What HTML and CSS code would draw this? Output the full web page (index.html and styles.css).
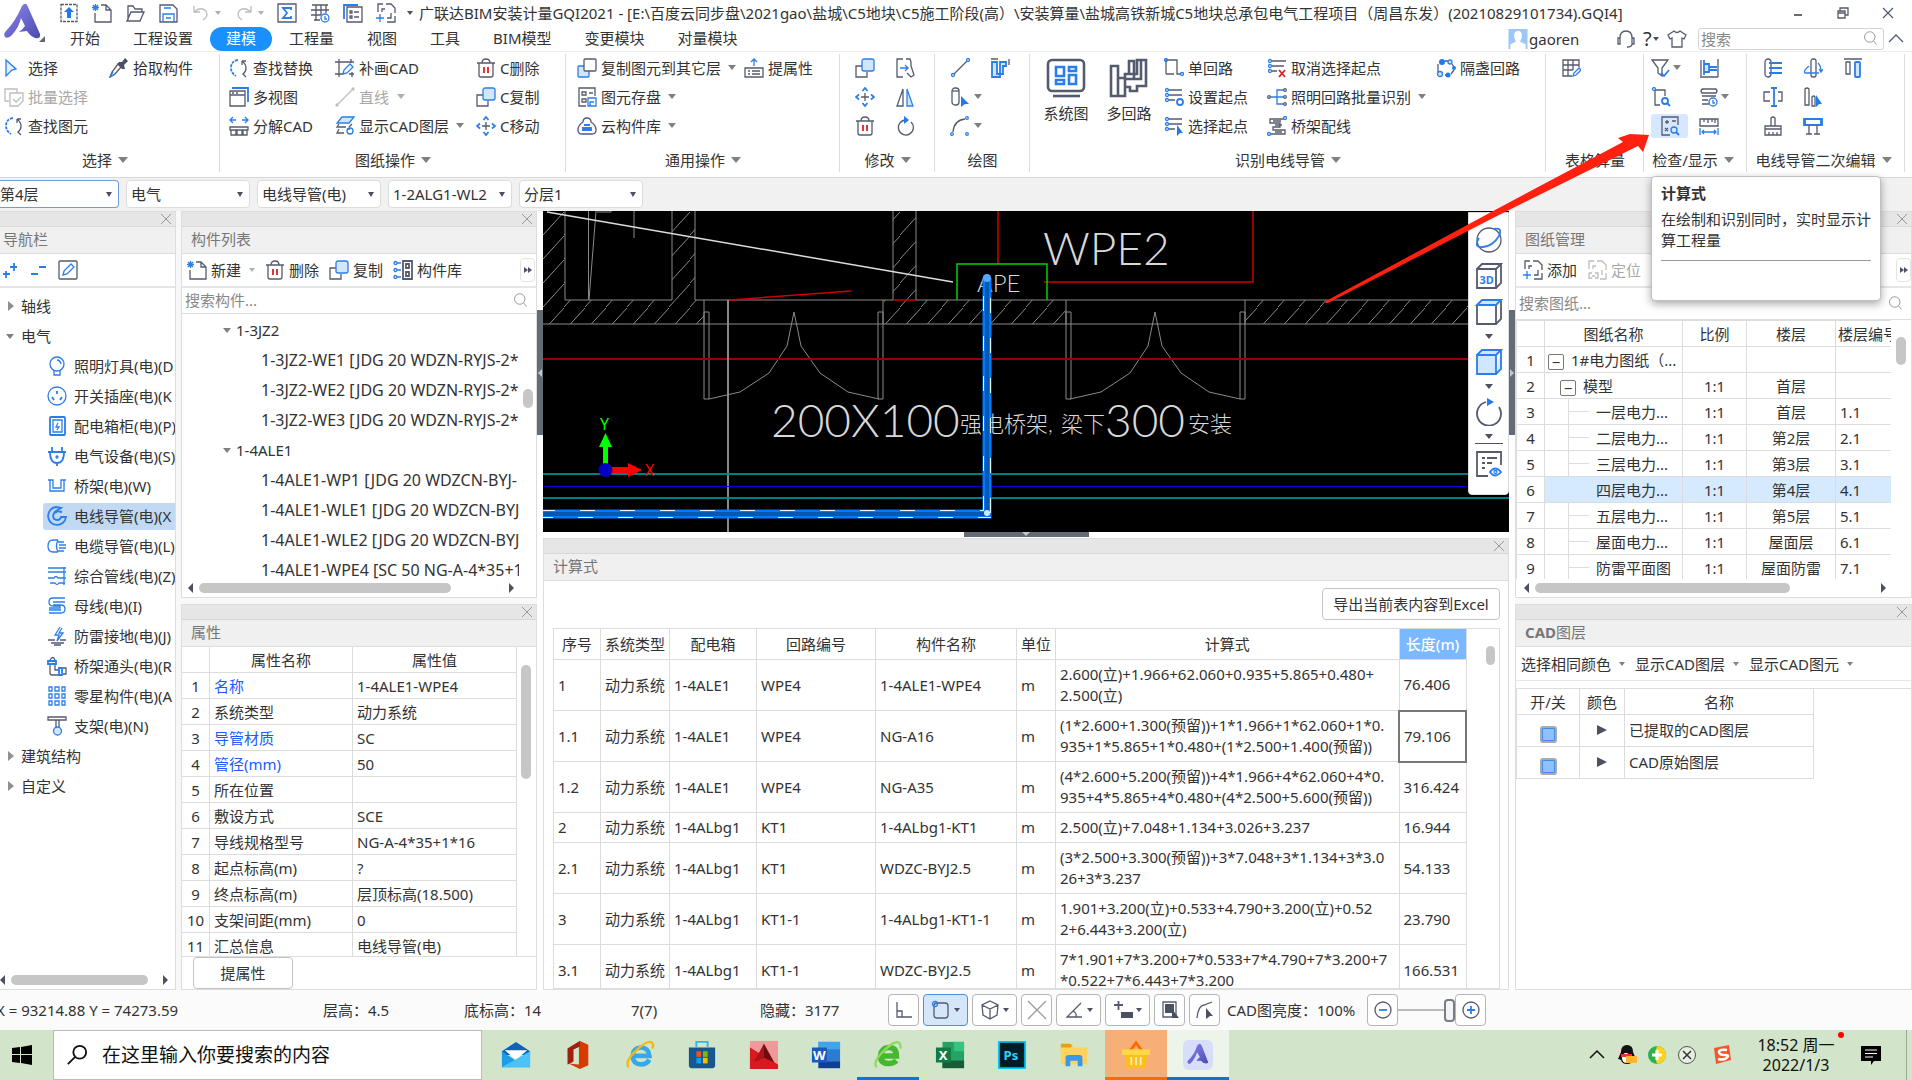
FILE: index.html
```html
<!DOCTYPE html>
<html lang="zh-CN">
<head>
<meta charset="utf-8">
<title>广联达BIM安装计量GQI2021</title>
<link rel="stylesheet" href="styles.css">
</head>
<body>
<svg class="sprite" aria-hidden="true">
  <defs>
    <linearGradient id="g-logo" x1="0" y1="0" x2="1" y2="1"><stop offset="0" stop-color="#8f86ee"/><stop offset="1" stop-color="#4a4bb0"/></linearGradient>
    <pattern id="hatch" width="21" height="24" patternUnits="userSpaceOnUse"><path d="M0 24L21 1" stroke="#8a8a8a" fill="none"/></pattern>
  </defs>
  <symbol id="i-upload" viewBox="0 0 20 20"><path class="d dash" d="M2 1.500h16v17h-16z"/><path class="fb" d="M10 4l5 5h-3v6h-4v-6h-3z"/></symbol>
  <symbol id="i-new" viewBox="0 0 20 20"><path class="d" d="M9 2h5l5 5v12h-16v-9M14 2v5h5"/><path class="b" d="M1 2l5 5M6 2l-5 5M3.500 1v7M0 4.500h7"/></symbol>
  <symbol id="i-open" viewBox="0 0 20 20"><path class="d" d="M3 17v-14h5l2 3h7v3M2 18l4-9h13l-4 9z"/></symbol>
  <symbol id="i-save" viewBox="0 0 20 20"><path class="d" d="M2 2h13l4 4v13h-17z"/><path class="b" d="M5 19v-8h11v8M6 5h7M8 15h5"/></symbol>
  <symbol id="i-undo" viewBox="0 0 20 20"><path class="g" d="M3 3v6h6M3 9q7-6 12-1q3 5-3 9"/></symbol>
  <symbol id="i-redo" viewBox="0 0 20 20"><path class="g" d="M17 3v6h-6M17 9q-7-6-12-1q-3 5 3 9"/></symbol>
  <symbol id="i-sum" viewBox="0 0 20 20"><path class="d" d="M1 1h18v18h-18z"/><path class="b w2" d="M14 7v-2h-8l4 5-4 5h8v-2"/></symbol>
  <symbol id="i-grid" viewBox="0 0 20 20"><path class="d" d="M2 2h16M1 7h18M1 12h10M4 17h6M6 2v16M11 2v10M16 2v8"/><circle class="b" cx="15" cy="15" r="4"/><path class="b" d="M15 13v3h2"/></symbol>
  <symbol id="i-list" viewBox="0 0 20 20"><path class="b w2" d="M1 16v-14h14"/><path class="d" d="M4 4h15v15h-15zM11 9h5M11 14h5"/><path class="d" d="M7 8h2v2h-2zM7 13h2v2h-2z"/></symbol>
  <symbol id="i-addsheet" viewBox="0 0 20 20"><path class="d" d="M2 9v-8h5M10 1h5l4 4v5M19 13v6h-8M6 9v-3h3M15 10v5h-4"/><path class="b" d="M4 11v8M0 15h8"/></symbol>
  <symbol id="i-locate" viewBox="0 0 20 20"><path class="g" d="M2 9v-8h5M10 1h5l4 4v5M19 13v6h-6M6 9v-3h3M15 10v5M2 13h3M2 13v5h3M8 13h3v5h-3M5 16h3"/></symbol>
  <symbol id="i-cursor" viewBox="0 0 20 20"><path class="b cl" d="M2 2l10 9-4 1-6 6z"/></symbol>
  <symbol id="i-batch" viewBox="0 0 20 20"><path class="g" d="M13 6v-4h-12v12h4M6 6h13v8l-5 5h-8zM9 12l3 3 5-5"/></symbol>
  <symbol id="i-find" viewBox="0 0 20 20"><path class="b w2 dash" d="M9 2q-7 1-7 8 0 5 5 8"/><path class="d" d="M13 3q4 3 4 7 0 4-3 6l3 3M13 3h4M13 3v4"/></symbol>
  <symbol id="i-pipette" viewBox="0 0 20 20"><path class="fd" d="M10 4l3 0 3-4 3 3-4 4 1 4-3 0-5-5z"/><path class="d" d="M9 6l-6 8-2 5 5-3 6-7"/><path class="b" d="M4 14l-3 5 5-3"/></symbol>
  <symbol id="i-drawcad" viewBox="0 0 20 20"><path class="d" d="M0 4h19M4 1v18M0 16h8M16 1v4M14 16h5M17 14v5"/><path class="b" d="M8 16l1-4 6-6 3 3-6 6z"/></symbol>
  <symbol id="i-trash" viewBox="0 0 20 20"><path class="d" d="M1 5h18M6 5q0-4 4-4t4 4M3 5v12q0 2 2 2h10q2 0 2-2v-12"/><path class="r w2" d="M8 9v6M12 9v6"/></symbol>
  <symbol id="i-multi" viewBox="0 0 20 20"><path class="b w2" d="M3 1h16v14"/><path class="d" d="M1 4h15v15h-15zM1 8h15M3 6h2M7 6h2"/></symbol>
  <symbol id="i-line0" viewBox="0 0 20 20"><path class="g" d="M3 17L17 3"/><circle class="g" cx="2" cy="18" r="1"/><circle class="g" cx="18" cy="2" r="1"/></symbol>
  <symbol id="i-copyc" viewBox="0 0 20 20"><path class="d" d="M7 8h-6v11h11v-5"/><rect class="b lb" x="7" y="1" width="12" height="12" rx="2"/></symbol>
  <symbol id="i-copyf" viewBox="0 0 20 20"><rect class="b lb" x="1" y="8" width="11" height="11" rx="1"/><rect class="d wf" x="7" y="1" width="12" height="12" rx="1"/></symbol>
  <symbol id="i-split" viewBox="0 0 20 20"><path class="b" d="M1 4h6M13 4h6M4 1l-3 3 3 3M16 1l3 3-3 3"/><path class="d" d="M1 11h18v3h-18zM2 14v5h5v-5M8 14v5h5v-5M14 14v5h4v-5"/></symbol>
  <symbol id="i-layers" viewBox="0 0 20 20"><path class="b lb" d="M7 1h12l-5 6h-12z"/><path class="d" d="M4 8l-2 3h9M17 8l-3 3M4 13l-2 4h7M12 13h3"/><circle class="b" cx="15" cy="15" r="3"/></symbol>
  <symbol id="i-move" viewBox="0 0 20 20"><path class="d" d="M10 6v8M6 10h8"/><path class="b w2" d="M7.500 4l2.500-3 2.500 3M7.500 16l2.500 3 2.500-3M4 7.500l-3 2.500 3 2.500M16 7.500l3 2.500-3 2.500"/></symbol>
  <symbol id="i-storage" viewBox="0 0 20 20"><path class="d" d="M18 9v-8h-16v18h7M5 5h4v3h-4zM12 6h4M5 12h4v3h-4z"/><path class="b" d="M11 11h8v8h-8zM13 19v-4h4"/></symbol>
  <symbol id="i-cloud" viewBox="0 0 20 20"><path class="d" d="M6 6q0-4 4-4t4 4q5 3 5 8 0 4-4 4h-10q-4 0-4-4 0-5 5-8z"/><path class="b w2" d="M7 9h6M6 12h8v2h-8z"/></symbol>
  <symbol id="i-prop" viewBox="0 0 20 20"><path class="b" d="M10 8v-7M7 4l3-3 3 3"/><path class="d" d="M1 10h18v9h-18zM4 13h2M8 13h8M4 16h2M8 16h8"/></symbol>
  <symbol id="i-stretch" viewBox="0 0 20 20"><path class="d" d="M8 1h-6v18h6M11 1h4l1 3v4l3 9-3 2-4-4"/><path class="b" d="M5 10h8M10 7l3 3-3 3"/></symbol>
  <symbol id="i-mirror" viewBox="0 0 20 20"><path class="d" d="M8 2v17h-6z"/><path class="b lb" d="M12 2v17h6z"/></symbol>
  <symbol id="i-rotate" viewBox="0 0 20 20"><path class="d" d="M11 4a7.500 7.500 0 1 0 5 2"/><path class="fb" d="M9 0l5 4-5 4z"/></symbol>
  <symbol id="i-line" viewBox="0 0 20 20"><path class="d" d="M4 16L17 3"/><circle class="b" cx="3" cy="17" r="1.500"/><circle class="b" cx="18" cy="2" r="1.500"/></symbol>
  <symbol id="i-pipe" viewBox="0 0 20 20"><path class="d" d="M1 1h7M19 1v6"/><path class="b lb w2" d="M2 4h5v12h3v3h-8zM10 4h6v4h-3v8h-3z"/></symbol>
  <symbol id="i-tube" viewBox="0 0 20 20"><rect class="d" x="2" y="1" width="7" height="17" rx="3"/><path class="d" d="M2 4h7"/><path class="fb" d="M11 9l8 8-4 0-4 3z"/></symbol>
  <symbol id="i-arc" viewBox="0 0 20 20"><path class="d" d="M3 16Q4 4 15 3"/><circle class="b" cx="2" cy="18" r="1.300"/><circle class="b" cx="17" cy="2" r="1.300"/><circle class="b" cx="17" cy="18" r="1.300"/></symbol>
  <symbol id="i-system" viewBox="0 0 40 40"><rect class="d w3" x="2" y="2" width="36" height="31" rx="4"/><path class="b w3" d="M10 9h8v9h-8zM10 22h8v4h-8zM23 9h7v4h-7zM23 17h7v9h-7z"/><path class="d w3" d="M7 38h27"/></symbol>
  <symbol id="i-loops" viewBox="0 0 40 40"><path class="d w3" d="M2 8h7v12h7v-4h4v-13h5v18h-9v17h-14zM9 20v18M20 16h8v-14h9v26h-9v5h-7v-4h-5M32 2v19h-11"/></symbol>
  <symbol id="i-single" viewBox="0 0 20 20"><path class="d" d="M2 16v-14h11v14h4M2 16h8"/><circle class="b" cx="2" cy="2" r="1.500"/><circle class="b" cx="18" cy="16" r="1.500"/></symbol>
  <symbol id="i-start" viewBox="0 0 20 20"><path class="d" d="M5 3h13M5 8h13M5 13h6"/><circle class="b" cx="3" cy="3" r="1.500"/><circle class="b" cx="3" cy="8" r="1.500"/><circle class="b" cx="3" cy="13" r="1.500"/><circle class="b w2" cx="16" cy="15" r="3"/></symbol>
  <symbol id="i-pick" viewBox="0 0 20 20"><path class="d" d="M5 3h13M5 8h13M5 13h6"/><circle class="b" cx="3" cy="3" r="1.500"/><circle class="b" cx="3" cy="8" r="1.500"/><circle class="b" cx="3" cy="13" r="1.500"/><path class="fb" d="M13 9l6 8h-3l-3 3z"/></symbol>
  <symbol id="i-unpick" viewBox="0 0 20 20"><path class="d" d="M5 3h14M5 8h12M5 13h5"/><circle class="b" cx="3" cy="3" r="1.500"/><circle class="b" cx="3" cy="8" r="1.500"/><circle class="b" cx="3" cy="13" r="1.500"/><path class="r w2" d="M12 12l6 7M18 12l-6 7"/></symbol>
  <symbol id="i-branch" viewBox="0 0 20 20"><path class="b" d="M3 10h14M17 3h-7v14h7"/><circle class="d" cx="2" cy="10" r="1.300"/><circle class="d" cx="18" cy="3" r="1.300"/><circle class="d" cx="18" cy="10" r="1.300"/><circle class="d" cx="18" cy="17" r="1.300"/></symbol>
  <symbol id="i-wiring" viewBox="0 0 20 20"><path class="d" d="M17 3h-14v4h10v4h-7v3h12v4h-14M6 5h8M8 9h7M8 16h7"/><circle class="b" cx="18" cy="2" r="1.500"/><circle class="b" cx="2" cy="18" r="1.500"/></symbol>
  <symbol id="i-lamp" viewBox="0 0 20 20"><path class="d" d="M2 6v8M9 3h4M16 6l2 3M9 17h4M18 12l-3 4"/><circle class="fb" cx="6" cy="4" r="3"/><circle class="b lb" cx="14" cy="4" r="2"/><circle class="b lb" cx="4" cy="16" r="2.500"/><circle class="fb" cx="18" cy="10" r="2"/><circle class="fb" cx="12" cy="17" r="2.500"/></symbol>
  <symbol id="i-table" viewBox="0 0 20 20"><path class="d" d="M18 9v-7h-16v16h9M2 7h16M2 12h10M7 2v16M12 2v10"/><path class="b" d="M12 18l1-3 5-5 2 2-5 5z"/></symbol>
  <symbol id="i-filter" viewBox="0 0 20 20"><path class="d" d="M1 2h16l-6 8v8l-4-3v-5z"/><path class="b w2" d="M10 15l3 3 5-6"/></symbol>
  <symbol id="i-gate" viewBox="0 0 20 20"><path class="d" d="M1 19h18M19 1v18M2 2v16"/><path class="b lb w2" d="M5 2v15M5 6h5v8h-5M10 9h8M10 12h8"/></symbol>
  <symbol id="i-checkline" viewBox="0 0 20 20"><path class="d" d="M4 3v15h5M4 3h10v6"/><circle class="b" cx="3" cy="2" r="1.500"/><circle class="b w2" cx="14" cy="14" r="3"/><path class="b w2" d="M16 16l3 3"/></symbol>
  <symbol id="i-lines" viewBox="0 0 20 20"><path class="d" d="M3 2h14q2 2 0 4h-14q-2-2 0-4M3 9h14M3 13h6M3 17h7"/><circle class="b" cx="14" cy="15" r="4"/><path class="b" d="M14 13v3h2"/></symbol>
  <symbol id="i-formula" viewBox="0 0 20 20"><path class="d" d="M18 9v-8h-16v18h8M5 6h4M7 4v4M12 5h4M5 12l3 3M8 12l-3 3"/><circle class="b" cx="14" cy="14" r="3"/><path class="b w2" d="M16 16l3 3"/></symbol>
  <symbol id="i-ruler" viewBox="0 0 20 20"><path class="d" d="M1 3h18v7h-18zM5 3v3M9 3v4M13 3v3M16 3v4"/><path class="b" d="M1 12v7M19 12v7M3 16h14M5 14l-2 2 2 2M15 14l2 2-2 2"/></symbol>
  <symbol id="i-e1" viewBox="0 0 20 20"><rect class="d" x="2" y="1" width="6" height="18" rx="3"/><path class="b w2" d="M6 5h13M6 10h13M6 15h13"/></symbol>
  <symbol id="i-e2" viewBox="0 0 20 20"><rect class="d" x="8" y="1" width="5" height="18" rx="2"/><path class="b" d="M6 8q-6 5-4 7h14M15 5q3 3 3 8M16 11l2 3 2-3"/></symbol>
  <symbol id="i-e3" viewBox="0 0 20 20"><path class="d" d="M1 1h18M3 4h4v12h-4z"/><rect class="b lb w2" x="12" y="4" width="5" height="15" rx="1"/></symbol>
  <symbol id="i-e4" viewBox="0 0 20 20"><path class="d" d="M7 5h-6v9h6M15 5h4v9h-4"/><path class="b w2" d="M8 1h6M8 19h6M11 1v18"/></symbol>
  <symbol id="i-e5" viewBox="0 0 20 20"><path class="d" d="M2 2q2-2 4 0v16h-4zM9 10q2-2 3 0v9h-3z"/><path class="fb" d="M13 8l6 9h-3l-3 3z"/></symbol>
  <symbol id="i-e6" viewBox="0 0 20 20"><path class="d" d="M2 10h16v9h-16zM2 13h16M8 10v-8q2-2 4 0v8M6 16v3M10 16v3M14 16v3"/></symbol>
  <symbol id="i-e7" viewBox="0 0 20 20"><path class="b w2" d="M2 3h16v6h-16zM1 2v8M19 2v8"/><path class="d" d="M6 9v9M14 9v9M3 18h6M11 18h6"/></symbol>
  <symbol id="i-search" viewBox="0 0 20 20"><circle class="g2" cx="9" cy="8" r="7"/><path class="g2" d="M14 13l4 5"/></symbol>
  <symbol id="i-pencil" viewBox="0 0 20 20"><rect class="d" x="1" y="1" width="18" height="18" rx="1"/><path class="b" d="M5 15l1-4 7-7 3 3-7 7z"/></symbol>
  <symbol id="i-lib" viewBox="0 0 20 20"><path class="d w2" d="M10 1h9v18h-9zM13 4h3v4h-3zM13 12h3v4h-3z"/><path class="b" d="M4 3h4M4 10h4M4 17h4"/><circle class="b" cx="2.500" cy="3" r="1.500"/><circle class="b" cx="2.500" cy="10" r="1.500"/><circle class="b" cx="2.500" cy="17" r="1.500"/></symbol>
  <symbol id="n-bulb" viewBox="0 0 20 20"><circle class="b" cx="10" cy="8" r="7"/><path class="b" d="M7 14v5h6v-5M10 4q3 0 4 4"/></symbol>
  <symbol id="n-socket" viewBox="0 0 20 20"><circle class="b" cx="10" cy="10" r="9"/><path class="b w2" d="M10 5v3M5 11l2 3M15 11l-2 3"/></symbol>
  <symbol id="n-box" viewBox="0 0 20 20"><rect class="b w2" x="3" y="1" width="15" height="18" rx="1"/><path class="b" d="M6 4h9v12h-9zM11 7l-2 4h3l-2 3"/></symbol>
  <symbol id="n-plug" viewBox="0 0 20 20"><path class="b w2" d="M5 1v5M15 1v5M1 6h18M3 6q0 11 7 11t7-11M10 17v3"/><circle class="b" cx="10" cy="11" r="1"/></symbol>
  <symbol id="n-tray" viewBox="0 0 20 20"><path class="b" d="M1 4h5v8h8v-8h5M3 4v11h14v-11"/></symbol>
  <symbol id="n-conduit" viewBox="0 0 20 20"><path class="b w2" d="M9 1a9 9 0 1 0 10 10h-5a4 4 0 1 1-4-5M9 1l5 1-5 3 6 1"/></symbol>
  <symbol id="n-cable" viewBox="0 0 20 20"><path class="b" d="M11 4h-5q-5 0-5 6t5 6h5M11 4q-3 6 0 12M11 6h6M12 9h7M12 12h7M11 15h6"/></symbol>
  <symbol id="n-multi" viewBox="0 0 20 20"><path class="b" d="M1 2h18M1 6h18M17 1v18M1 12h6q2-3 4 0h8M3 17h5q2 3 4 0h6"/></symbol>
  <symbol id="n-bus" viewBox="0 0 20 20"><path class="b" d="M18 2h-12q-4 0-4 4t4 4h7v2h-11M18 6h-12M2 17h12q4 0 4-4t-4-4h-8M2 14h12"/></symbol>
  <symbol id="n-light" viewBox="0 0 20 20"><path class="b" d="M13 1l-5 8h4l-2 6 6-8h-4l3-5"/><path class="d" d="M1 14h7M13 14h6M4 17h13M7 19h7"/></symbol>
  <symbol id="n-joint" viewBox="0 0 20 20"><path class="d" d="M3 8v9q0 2 2 2h7M8 8v6h4M3 4q3-5 5 0M16 12h3v6h-3"/><path class="b w2" d="M1 5h8v3h-8zM12 12h3v7h-3z"/></symbol>
  <symbol id="n-misc" viewBox="0 0 20 20"><path class="b" d="M2 1h3v4h-3zM8 1h4v4h-4zM15 1h3v4h-3zM2 8h3v4h-3zM8 8h4v4h-4zM15 8h3v4h-3zM2 15h3v4h-3zM8 15h4v4h-4zM15 15h3v4h-3z"/></symbol>
  <symbol id="n-support" viewBox="0 0 20 20"><path class="d" d="M1 1h18v3h-18zM9 4v9M12 4v9"/><circle class="b lb" cx="10.500" cy="15" r="4"/></symbol>
  <symbol id="v-orbit" viewBox="0 0 28 28"><circle class="d" cx="14" cy="14" r="12"/><path class="b w2" d="M4 12q-6 10 4 9t16-11q4-9-5-7"/></symbol>
  <symbol id="v-3d" viewBox="0 0 28 28"><path class="d w2" d="M2 7h19v19h-19zM2 7l5-5h19l-5 5M26 2v19l-5 5"/></symbol>
  <symbol id="v-top" viewBox="0 0 28 28"><path class="d w2" d="M2 7v19h19v-19M26 3v18l-5 5"/><path class="b lb w2" d="M2 7l5-5h19l-5 5z"/></symbol>
  <symbol id="v-solid" viewBox="0 0 28 28"><path class="b lb w2" d="M2 7h19v19h-19zM2 7l5-5h19l-5 5M26 2v19l-5 5"/></symbol>
  <symbol id="v-rotate" viewBox="0 0 28 28"><path class="d w2" d="M11 4a12 12 0 1 0 13 5"/><path class="fb" d="M12 0l7 4-7 4z"/></symbol>
  <symbol id="v-list" viewBox="0 0 28 28"><path class="d w2" d="M26 15v-13h-24v24h11M7 8h3M12 8h10M7 13h3M12 13h5M7 18h3"/><path class="b w2" d="M15 22q5-7 11 0q-6 7-11 0z"/><circle class="b" cx="20.500" cy="22" r="1.500"/></symbol>
</svg>

<header class="top">
  <svg class="logo" viewBox="0 0 44 40"><path fill="url(#g-logo)" d="M20 3q4-5 6 1l12 27q1 5-5 4q-5-2-8-7l-8 1q4-3 6-6l-4-8q-2 9-9 17q-4 4-7 2q-2-3 1-6q9-9 16-25z"/><path fill="#666" d="M43 33v6h-6z"/></svg>
  <div class="top-rows">
    <div class="titlebar">
      <div class="quick">
        <button aria-label="上传"><svg><use href="#i-upload"/></svg></button>
        <button aria-label="新建"><svg><use href="#i-new"/></svg></button>
        <button aria-label="打开"><svg><use href="#i-open"/></svg></button>
        <button aria-label="保存"><svg><use href="#i-save"/></svg></button>
        <button class="drop" aria-label="撤销"><svg><use href="#i-undo"/></svg><i class="caret pale"></i></button>
        <button class="drop" aria-label="恢复"><svg><use href="#i-redo"/></svg><i class="caret pale"></i></button>
        <button aria-label="汇总计算"><svg><use href="#i-sum"/></svg></button>
        <button aria-label="查看报表"><svg><use href="#i-grid"/></svg></button>
        <button aria-label="清单"><svg><use href="#i-list"/></svg></button>
        <button aria-label="添加图纸"><svg><use href="#i-addsheet"/></svg></button>
        <i class="caret dark"></i>
      </div>
      <h1>广联达BIM安装计量GQI2021 - [E:\百度云同步盘\2021gao\盐城\C5地块\C5施工阶段(高）\安装算量\盐城高铁新城C5地块总承包电气工程项目（周昌东发）(20210829101734).GQI4]</h1>
      <div class="winbtns">
        <button aria-label="最小化"><svg viewBox="0 0 14 14"><path class="d w2" d="M3 9h8"/></svg></button>
        <button aria-label="还原"><svg viewBox="0 0 14 14"><path class="d" d="M2 5h7v7h-7zM4 5v-3h8v7h-3M2 7h7"/></svg></button>
        <button aria-label="关闭"><svg viewBox="0 0 14 14"><path class="d" d="M2 2l10 10M12 2l-10 10"/></svg></button>
      </div>
    </div>
    <div class="tabrow">
      <nav class="tabs">
        <a href="#">开始</a><a href="#">工程设置</a><a href="#" class="on">建模</a><a href="#">工程量</a><a href="#">视图</a><a href="#">工具</a><a href="#">BIM模型</a><a href="#">变更模块</a><a href="#">对量模块</a>
      </nav>
      <div class="user">
        <svg class="avatar" viewBox="0 0 20 21"><path fill="#9cc8f5" d="M0 0h20v21h-20z"/><path fill="#fff" d="M6 6q0-4 4-4t4 4q0 5-2 7l6 3v5h-16v-5l6-3q-2-2-2-7z"/></svg>
        <span>gaoren</span>
      </div>
      <div class="help">
        <button aria-label="客服"><svg><path class="d" d="M5 12v-3q0-7 6-7t6 7v3M3 9h2v6h-2zM17 9h2v6h-2zM17 15q0 3-5 3"/></svg></button>
        <button class="q" aria-label="帮助">?<i class="caret dark sm"></i></button>
        <button aria-label="皮肤"><svg><path class="d" d="M7 2q3 3 6 0l6 4-2 4-2-1v9h-10v-9l-2 1-2-4z"/></svg></button>
      </div>
      <div class="search"><input type="text" placeholder="搜索" aria-label="搜索"><svg><use href="#i-search"/></svg></div>
      <button class="fold" aria-label="折叠"><svg viewBox="0 0 16 16"><path class="d" d="M1 11l7-7 7 7"/></svg></button>
    </div>
  </div>
</header>

<section class="ribbon">
  <div class="group g1">
    <div class="cells">
      <button><svg><use href="#i-cursor"/></svg>选择</button><button><svg><use href="#i-pipette"/></svg>拾取构件</button>
      <button class="off"><svg><use href="#i-batch"/></svg>批量选择</button><span></span>
      <button><svg><use href="#i-find"/></svg>查找图元</button>
    </div>
    <div class="glabel">选择<i class="caret"></i></div>
  </div>
  <div class="group g2">
    <div class="cells">
      <button><svg><use href="#i-find"/></svg>查找替换</button><button><svg><use href="#i-drawcad"/></svg>补画CAD</button><button><svg><use href="#i-trash"/></svg>C删除</button>
      <button><svg><use href="#i-multi"/></svg>多视图</button><button class="off"><svg><use href="#i-line0"/></svg>直线<i class="caret pale sp"></i></button><button><svg><use href="#i-copyc"/></svg>C复制</button>
      <button><svg><use href="#i-split"/></svg>分解CAD</button><button><svg><use href="#i-layers"/></svg>显示CAD图层<i class="caret"></i></button><button><svg><use href="#i-move"/></svg>C移动</button>
    </div>
    <div class="glabel">图纸操作<i class="caret"></i></div>
  </div>
  <div class="group g3">
    <div class="cells">
      <button><svg><use href="#i-copyf"/></svg>复制图元到其它层<i class="caret"></i></button><button><svg><use href="#i-prop"/></svg>提属性</button>
      <button><svg><use href="#i-storage"/></svg>图元存盘<i class="caret"></i></button><span></span>
      <button><svg><use href="#i-cloud"/></svg>云构件库<i class="caret"></i></button>
    </div>
    <div class="glabel">通用操作<i class="caret"></i></div>
  </div>
  <div class="group g4">
    <div class="cells">
      <button aria-label="复制"><svg><use href="#i-copyc"/></svg></button><button aria-label="拉伸"><svg><use href="#i-stretch"/></svg></button>
      <button aria-label="移动"><svg><use href="#i-move"/></svg></button><button aria-label="镜像"><svg><use href="#i-mirror"/></svg></button>
      <button aria-label="删除"><svg><use href="#i-trash"/></svg></button><button aria-label="旋转"><svg><use href="#i-rotate"/></svg></button>
    </div>
    <div class="glabel">修改<i class="caret"></i></div>
  </div>
  <div class="group g5">
    <div class="cells">
      <button aria-label="直线"><svg><use href="#i-line"/></svg></button><button aria-label="管道"><svg><use href="#i-pipe"/></svg></button>
      <button aria-label="立管"><svg><use href="#i-tube"/></svg><i class="caret near"></i></button><span></span>
      <button aria-label="弧线"><svg><use href="#i-arc"/></svg><i class="caret near"></i></button>
    </div>
    <div class="glabel">绘图</div>
  </div>
  <div class="group g6">
    <div class="cells">
      <button class="big"><svg><use href="#i-system"/></svg>系统图</button>
      <button class="big"><svg><use href="#i-loops"/></svg>多回路</button>
      <button><svg><use href="#i-single"/></svg>单回路</button><button><svg><use href="#i-unpick"/></svg>取消选择起点</button><button><svg><use href="#i-lamp"/></svg>隔盏回路</button>
      <button><svg><use href="#i-start"/></svg>设置起点</button><button class="wide"><svg><use href="#i-branch"/></svg>照明回路批量识别<i class="caret"></i></button>
      <button><svg><use href="#i-pick"/></svg>选择起点</button><button><svg><use href="#i-wiring"/></svg>桥架配线</button>
    </div>
    <div class="glabel">识别电线导管<i class="caret"></i></div>
  </div>
  <div class="group g7">
    <div class="cells"><button aria-label="表格"><svg><use href="#i-table"/></svg></button></div>
    <div class="glabel">表格算量</div>
  </div>
  <div class="group g8">
    <div class="cells">
      <button aria-label="过滤"><svg><use href="#i-filter"/></svg><i class="caret near"></i></button><button aria-label="检查回路"><svg><use href="#i-gate"/></svg></button>
      <button aria-label="检查线"><svg><use href="#i-checkline"/></svg></button><button aria-label="显示"><svg><use href="#i-lines"/></svg><i class="caret near"></i></button>
      <button class="hot" aria-label="计算式" aria-describedby="tip"><svg><use href="#i-formula"/></svg></button><button aria-label="测量"><svg><use href="#i-ruler"/></svg></button>
    </div>
    <div class="glabel">检查/显示<i class="caret"></i></div>
    <div class="tooltip" id="tip" role="tooltip"><b>计算式</b><p>在绘制和识别同时，实时显示计算工程量</p><hr></div>
  </div>
  <div class="group g9">
    <div class="cells">
      <button aria-label="排列"><svg><use href="#i-e1"/></svg></button><button aria-label="翻转"><svg><use href="#i-e2"/></svg></button><button aria-label="对齐"><svg><use href="#i-e3"/></svg></button>
      <button aria-label="打断"><svg><use href="#i-e4"/></svg></button><button aria-label="拾取"><svg><use href="#i-e5"/></svg></button><span></span>
      <button aria-label="格式刷"><svg><use href="#i-e6"/></svg></button><button aria-label="支架"><svg><use href="#i-e7"/></svg></button>
    </div>
    <div class="glabel">电线导管二次编辑<i class="caret"></i></div>
  </div>
</section>

<section class="pickers">
  <label class="pick on"><select aria-label="楼层"><option>第4层</option></select></label>
  <label class="pick"><select aria-label="专业"><option>电气</option></select></label>
  <label class="pick"><select aria-label="构件类型"><option>电线导管(电)</option></select></label>
  <label class="pick"><select aria-label="构件"><option>1-2ALG1-WL2</option></select></label>
  <label class="pick"><select aria-label="分层"><option>分层1</option></select></label>
</section>

<main class="work">
  <aside class="panel nav">
    <div class="strip"><button aria-label="关闭"></button></div>
    <h2>导航栏</h2>
    <div class="tools navtools">
      <button aria-label="展开"><svg><path class="b w2" d="M3 14h7M6 11v7M10 7h7M14 3v8"/></svg></button>
      <button aria-label="折叠"><svg><path class="b w2" d="M2 14h7M10 7h7"/></svg></button>
      <button aria-label="编辑"><svg><use href="#i-pencil"/></svg></button>
    </div>
    <ul class="tree">
      <li class="top1"><i class="tri"></i>轴线</li>
      <li class="top1"><i class="caret"></i>电气</li>
      <li><a href="#"><svg><use href="#n-bulb"/></svg>照明灯具(电)(D</a></li>
      <li><a href="#"><svg><use href="#n-socket"/></svg>开关插座(电)(K</a></li>
      <li><a href="#"><svg><use href="#n-box"/></svg>配电箱柜(电)(P)</a></li>
      <li><a href="#"><svg><use href="#n-plug"/></svg>电气设备(电)(S)</a></li>
      <li><a href="#"><svg><use href="#n-tray"/></svg>桥架(电)(W)</a></li>
      <li><a href="#" class="on"><svg><use href="#n-conduit"/></svg>电线导管(电)(X</a></li>
      <li><a href="#"><svg><use href="#n-cable"/></svg>电缆导管(电)(L)</a></li>
      <li><a href="#"><svg><use href="#n-multi"/></svg>综合管线(电)(Z)</a></li>
      <li><a href="#"><svg><use href="#n-bus"/></svg>母线(电)(I)</a></li>
      <li><a href="#"><svg><use href="#n-light"/></svg>防雷接地(电)(J)</a></li>
      <li><a href="#"><svg><use href="#n-joint"/></svg>桥架通头(电)(R</a></li>
      <li><a href="#"><svg><use href="#n-misc"/></svg>零星构件(电)(A</a></li>
      <li><a href="#"><svg><use href="#n-support"/></svg>支架(电)(N)</a></li>
      <li class="top1"><i class="tri"></i>建筑结构</li>
      <li class="top1"><i class="tri"></i>自定义</li>
    </ul>
    <div class="hbar"><i class="larr"></i><div class="track"><div class="thumb"></div></div><i class="rarr"></i></div>
  </aside>

  <div class="side">
    <section class="panel complist">
      <div class="strip"><button aria-label="关闭"></button></div>
      <h2>构件列表</h2>
      <div class="tools">
        <button><svg><use href="#i-new"/></svg>新建<i class="caret pale sm sp"></i></button>
        <button><svg><use href="#i-trash"/></svg>删除</button>
        <button><svg><use href="#i-copyc"/></svg>复制</button>
        <button><svg><use href="#i-lib"/></svg>构件库</button>
        <button class="more" aria-label="更多"><i></i><i></i></button>
      </div>
      <div class="find"><input type="text" placeholder="搜索构件..." aria-label="搜索构件"><svg><use href="#i-search"/></svg></div>
      <div class="listbox">
        <ul>
          <li class="par"><i class="caret"></i>1-3JZ2</li>
          <li>1-3JZ2-WE1 [JDG 20 WDZN-RYJS-2*</li>
          <li>1-3JZ2-WE2 [JDG 20 WDZN-RYJS-2*</li>
          <li>1-3JZ2-WE3 [JDG 20 WDZN-RYJS-2*</li>
          <li class="par"><i class="caret"></i>1-4ALE1</li>
          <li>1-4ALE1-WP1 [JDG 20 WDZCN-BYJ-</li>
          <li>1-4ALE1-WLE1 [JDG 20 WDZCN-BYJ</li>
          <li>1-4ALE1-WLE2 [JDG 20 WDZCN-BYJ</li>
          <li>1-4ALE1-WPE4 [SC 50 NG-A-4*35+1</li>
        </ul>
        <div class="vbar"><div class="thumb"></div></div>
      </div>
      <div class="hbar"><i class="larr"></i><div class="track"><div class="thumb"></div></div><i class="rarr"></i></div>
    </section>
    <section class="panel props">
      <div class="strip"><button aria-label="关闭"></button></div>
      <h2>属性</h2>
      <div class="propbox">
        <div class="clip">
          <table>
            <colgroup><col class="c1"><col class="c2"><col></colgroup>
            <thead><tr><th></th><th>属性名称</th><th>属性值</th></tr></thead>
            <tbody>
              <tr><td>1</td><td class="key">名称</td><td>1-4ALE1-WPE4</td></tr>
              <tr><td>2</td><td>系统类型</td><td>动力系统</td></tr>
              <tr><td>3</td><td class="key">导管材质</td><td>SC</td></tr>
              <tr><td>4</td><td class="key">管径(mm)</td><td>50</td></tr>
              <tr><td>5</td><td>所在位置</td><td></td></tr>
              <tr><td>6</td><td>敷设方式</td><td>SCE</td></tr>
              <tr><td>7</td><td>导线规格型号</td><td>NG-A-4*35+1*16</td></tr>
              <tr><td>8</td><td>起点标高(m)</td><td>?</td></tr>
              <tr><td>9</td><td>终点标高(m)</td><td>层顶标高(18.500)</td></tr>
              <tr><td>10</td><td>支架间距(mm)</td><td>0</td></tr>
              <tr><td>11</td><td>汇总信息</td><td>电线导管(电)</td></tr>
            </tbody>
          </table>
        </div>
        <div class="vbar"><div class="thumb"></div></div>
      </div>
      <button class="btn">提属性</button>
    </section>
  </div>
  <div class="split"><i></i></div>

  <div class="center">
    <div class="canvas">
      <svg class="cad" viewBox="0 0 966 321" preserveAspectRatio="xMinYMin slice" fill="none" stroke="#8a8a8a">
        <g stroke="none" fill="url(#hatch)"><path d="M0 0h22v89h139v24h-161z"/><path d="M129 0h23v89h-23zM350 0h23v89h-23zM341 89h182v24h-182zM702 89h264v24h-264z"/></g>
        <path d="M22 0v89h107v-89M152 0v89h198v-89M373 0v89M45.500 0v89M53 0l-7 89M54 1h14v-1M91 0v27M373 89h593M0 113h966M161 89v24M340 89v24M523 89v24M702 89v24"/>
        <path d="M161 101h5v87h-5zM335 101h5v87h-5zM523 101h5v87h-5zM697 101h5v87h-5z"/>
        <path d="M251 101l-7 34-18 27-29 19-31 7M251 101l7 34 19 27 28 19 31 7M612 101l-7 34-18 27-29 19-31 7M612 101l7 34 19 27 28 19 31 7"/>
        <path stroke="#ddd" stroke-width="1.500" d="M4 1l406 70"/>
        <path stroke="#c00" stroke-width="1.500" d="M187 89l121-9M350 89h23"/>
        <path stroke="#900" stroke-width="2" d="M455 0v53M501 71h209v-71M0 148h966"/>
        <path stroke="#00d400" stroke-width="1.500" d="M414 89v-36h90v36"/>
        <path stroke="#888" stroke-width="2" d="M185 89v232"/>
        <path stroke="#007f80" stroke-width="2" d="M0 263h966M0 287h966"/>
        <path stroke="#0000d0" d="M0 275.500h966"/>
        <g class="cadtext" stroke="none">
          <text class="t48" x="500" y="54">WPE2</text>
          <text class="t24" x="434" y="81">APE</text>
          <text class="t48" x="228" y="226">200X100</text>
          <text class="t22" x="417" y="221">强电桥架,</text>
          <text class="t22" x="518" y="221">梁下</text>
          <text class="t48" x="562" y="226">300</text>
          <text class="t22" x="645" y="221">安装</text>
        </g>
        <path stroke="#007bff" stroke-width="9" d="M0 303h444v-236"/>
        <path stroke="#0558b0" stroke-width="4" d="M0 303h444v-236"/>
        <path stroke="#e8f2ff" stroke-dasharray="15 25" d="M-3 299.500h443M440.500 300v-230M-5 306.500h453M447.500 302v-230"/>
        <circle cx="444" cy="67" r="4" fill="#5aa5ff" stroke="none"/><circle cx="444" cy="302" r="3" fill="#cfe5ff" stroke="none"/>
        <g stroke="none"><path fill="#0f0" d="M60 255v-19h-4l6.500-14 6.500 14h-4v19z"/><path fill="#f00" d="M66 256h19v-4l14 7-14 7v-4h-19z"/><circle fill="#0000c0" cx="62.500" cy="259" r="7"/><text class="axis ay" x="57" y="219">Y</text><text class="axis ax" x="102" y="265">X</text></g>
      </svg>
      <div class="viewbar">
        <button aria-label="动态观察"><svg><use href="#v-orbit"/></svg></button>
        <button class="three" aria-label="三维"><svg><use href="#v-3d"/></svg><b>3D</b></button>
        <button aria-label="俯视"><svg><use href="#v-top"/></svg></button><i class="caret dark"></i>
        <button aria-label="实体"><svg><use href="#v-solid"/></svg></button><i class="caret dark"></i>
        <button aria-label="旋转"><svg><use href="#v-rotate"/></svg></button><i class="caret dark"></i>
        <hr>
        <button aria-label="显示设置"><svg><use href="#v-list"/></svg></button>
      </div>
    </div>
    <div class="hsplit"><i></i></div>
    <section class="panel calc">
      <div class="strip"><button aria-label="关闭"></button></div>
      <h2>计算式</h2>
      <div class="calcbody">
        <button class="btn">导出当前表内容到Excel</button>
        <div class="calcbox">
          <table>
            <colgroup><col class="k1"><col class="k2"><col class="k3"><col class="k4"><col class="k5"><col class="k6"><col><col class="k8"></colgroup>
            <thead><tr><th>序号</th><th>系统类型</th><th>配电箱</th><th>回路编号</th><th>构件名称</th><th>单位</th><th>计算式</th><th class="sel">长度(m)</th></tr></thead>
            <tbody>
              <tr><td>1</td><td>动力系统</td><td>1-4ALE1</td><td>WPE4</td><td>1-4ALE1-WPE4</td><td>m</td><td>2.600(立)+1.966+62.060+0.935+5.865+0.480+<br>2.500(立)</td><td>76.406</td></tr>
              <tr><td>1.1</td><td>动力系统</td><td>1-4ALE1</td><td>WPE4</td><td>NG-A16</td><td>m</td><td>(1*2.600+1.300(预留))+1*1.966+1*62.060+1*0.<br>935+1*5.865+1*0.480+(1*2.500+1.400(预留))</td><td class="cur">79.106</td></tr>
              <tr><td>1.2</td><td>动力系统</td><td>1-4ALE1</td><td>WPE4</td><td>NG-A35</td><td>m</td><td>(4*2.600+5.200(预留))+4*1.966+4*62.060+4*0.<br>935+4*5.865+4*0.480+(4*2.500+5.600(预留))</td><td>316.424</td></tr>
              <tr class="one"><td>2</td><td>动力系统</td><td>1-4ALbg1</td><td>KT1</td><td>1-4ALbg1-KT1</td><td>m</td><td>2.500(立)+7.048+1.134+3.026+3.237</td><td>16.944</td></tr>
              <tr><td>2.1</td><td>动力系统</td><td>1-4ALbg1</td><td>KT1</td><td>WDZC-BYJ2.5</td><td>m</td><td>(3*2.500+3.300(预留))+3*7.048+3*1.134+3*3.0<br>26+3*3.237</td><td>54.133</td></tr>
              <tr><td>3</td><td>动力系统</td><td>1-4ALbg1</td><td>KT1-1</td><td>1-4ALbg1-KT1-1</td><td>m</td><td>1.901+3.200(立)+0.533+4.790+3.200(立)+0.52<br>2+6.443+3.200(立)</td><td>23.790</td></tr>
              <tr><td>3.1</td><td>动力系统</td><td>1-4ALbg1</td><td>KT1-1</td><td>WDZC-BYJ2.5</td><td>m</td><td>7*1.901+7*3.200+7*0.533+7*4.790+7*3.200+7<br>*0.522+7*6.443+7*3.200</td><td>166.531</td></tr>
            </tbody>
          </table>
          <div class="vbar"><div class="thumb"></div></div>
        </div>
      </div>
    </section>
  </div>
  <div class="split"><i></i></div>

  <aside class="right">
    <section class="panel sheets">
      <div class="strip"><button aria-label="关闭"></button></div>
      <h2>图纸管理</h2>
      <div class="tools">
        <button><svg><use href="#i-addsheet"/></svg>添加</button>
        <button class="off"><svg><use href="#i-locate"/></svg>定位</button>
        <button class="more" aria-label="更多"><i></i><i></i></button>
      </div>
      <div class="find"><input type="text" placeholder="搜索图纸..." aria-label="搜索图纸"><svg><use href="#i-search"/></svg></div>
      <div class="sheetbox">
        <div class="clip">
          <table>
            <colgroup><col class="c1"><col class="s2"><col class="s3"><col class="s4"><col class="s5"></colgroup>
            <thead><tr><th></th><th>图纸名称</th><th>比例</th><th>楼层</th><th class="lt">楼层编号</th></tr></thead>
            <tbody>
              <tr><td>1</td><td class="t0"><button class="pm">−</button>1#电力图纸（...</td><td></td><td></td><td></td></tr>
              <tr><td>2</td><td class="t1"><button class="pm">−</button>模型</td><td>1:1</td><td>首层</td><td></td></tr>
              <tr><td>3</td><td class="t2">一层电力...</td><td>1:1</td><td>首层</td><td>1.1</td></tr>
              <tr><td>4</td><td class="t2">二层电力...</td><td>1:1</td><td>第2层</td><td>2.1</td></tr>
              <tr><td>5</td><td class="t2">三层电力...</td><td>1:1</td><td>第3层</td><td>3.1</td></tr>
              <tr class="on"><td>6</td><td class="t2">四层电力...</td><td>1:1</td><td>第4层</td><td>4.1</td></tr>
              <tr><td>7</td><td class="t2">五层电力...</td><td>1:1</td><td>第5层</td><td>5.1</td></tr>
              <tr><td>8</td><td class="t2">屋面电力...</td><td>1:1</td><td>屋面层</td><td>6.1</td></tr>
              <tr><td>9</td><td class="t2">防雷平面图</td><td>1:1</td><td>屋面防雷</td><td>7.1</td></tr>
            </tbody>
          </table>
        </div>
        <div class="vbar"><div class="thumb"></div></div>
      </div>
      <div class="hbar"><i class="larr"></i><div class="track"><div class="thumb"></div></div><i class="rarr"></i></div>
    </section>
    <section class="panel layers">
      <div class="strip"><button aria-label="关闭"></button></div>
      <h2><b>CAD</b>图层</h2>
      <div class="tools">
        <button>选择相同颜色<i class="caret sm sp"></i></button>
        <button>显示CAD图层<i class="caret sm sp"></i></button>
        <button>显示CAD图元<i class="caret sm sp"></i></button>
      </div>
      <div class="layerbox">
        <table>
          <thead><tr><th class="l1">开/关</th><th class="l2">颜色</th><th class="l3">名称</th></tr></thead>
          <tbody>
            <tr><td><input type="checkbox" checked aria-label="已提取的CAD图层"></td><td><i class="tri swatch"></i></td><td>已提取的CAD图层</td></tr>
            <tr><td><input type="checkbox" checked aria-label="CAD原始图层"></td><td><i class="tri swatch"></i></td><td>CAD原始图层</td></tr>
          </tbody>
        </table>
      </div>
    </section>
  </aside>
</main>

<footer class="status">
  <span class="s-xy">X = 93214.88 Y = 74273.59</span><span class="s-h">层高：4.5</span><span class="s-b">底标高：14</span><span class="s-n">7(7)</span><span class="s-c">隐藏：3177</span>
  <div class="sbtns">
    <button aria-label="正交"><svg><path class="d" d="M3 2v15h15M3 11h5v6"/></svg></button>
    <button class="dd on" aria-label="选择框"><svg><rect class="d" x="3" y="3" width="14" height="15" rx="3"/><circle class="b" cx="4" cy="4" r="2.500"/></svg><i class="caret dark sm"></i></button>
    <button class="dd" aria-label="视图"><svg><path class="d" d="M10 1l8 4-1 10-7 4-7-4-1-10zM2 5l8 4 8-4M10 9v10"/></svg><i class="caret dark sm"></i></button>
    <button aria-label="交点"><svg><path class="g2" d="M1 1l18 18M19 1l-18 18"/></svg></button>
    <button class="dd" aria-label="角度"><svg><path class="d" d="M17 3L3 17h15M9 11q4 2 3 6"/></svg><i class="caret dark sm"></i></button>
    <button class="dd" aria-label="添加"><svg><path class="d w2" d="M1 5h9M5.500 1v9"/><path class="fd" d="M8 12h12v6h-12z"/></svg><i class="caret dark sm"></i></button>
    <button aria-label="图层"><svg><path class="d" d="M3 2h13v15h-13z"/><path class="fd" d="M5 4h9v9h-9zM12 9l7 9h-7z"/></svg></button>
    <button aria-label="折线"><svg><path class="d" d="M2 18q1-12 7-13l8-3"/><path class="fd" d="M11 8l7 8-3 0-4 3z"/></svg></button>
  </div>
  <label for="bright">CAD图亮度：100%</label>
  <div class="zoomer">
    <button aria-label="降低"><svg><circle class="d" cx="10" cy="10" r="8"/><path class="b w2" d="M6 10h8"/></svg></button>
    <input id="bright" type="range" min="0" max="100" value="100">
    <button aria-label="提高"><svg><circle class="d" cx="10" cy="10" r="8"/><path class="b w2" d="M6 10h8M10 6v8"/></svg></button>
  </div>
</footer>

<footer class="taskbar">
  <button class="start" aria-label="开始"><svg viewBox="0 0 20 20"><path fill="#000" d="M0 3l8-1v7h-8zM9 2l11-2v9h-11zM0 10h8v8l-8-1zM9 10h11v10l-11-2z"/></svg></button>
  <label class="tsearch"><svg viewBox="0 0 24 24"><path fill="none" stroke="#111" stroke-width="2" d="M10 14l-8 8"/><circle fill="none" stroke="#111" stroke-width="2" cx="15" cy="9" r="7"/></svg><input type="text" placeholder="在这里输入你要搜索的内容"></label>
  <div class="apps">
    <button aria-label="邮件"><svg viewBox="0 0 32 32"><path fill="#0f62b5" d="M1 12L16 2l15 10v4h-30z"/><path fill="#fff" d="M4 11h24l-12 10z"/><path fill="#1b9de8" d="M1 12l15 10 15-10v17h-30z"/><path fill="#4cc3f8" d="M1 29L31 12v17z"/></svg></button>
    <button aria-label="Office"><svg viewBox="0 0 32 32"><path fill="#d83b01" d="M5 9L18 1l9 4v22l-9 4-12-6 11 1v-19l-6 3v13l-6 3z"/><path fill="#a02010" d="M5 9l13-8v6l-7 3v13l-6 3z"/></svg></button>
    <button aria-label="IE"><svg viewBox="0 0 32 32"><path fill="none" stroke="#38a9e8" stroke-width="5" d="M8 17h18q-1-9-9-9t-9 9q1 9 9 9 6 0 9-5"/><path fill="none" stroke="#f5b916" stroke-width="2.500" d="M4 29q-5-6 8-18t17-8q2 2 0 6"/></svg></button>
    <button aria-label="商店"><svg viewBox="0 0 32 32"><path fill="#17568f" d="M2 8h28v19q0 3-3 3h-22q-3 0-3-3z"/><path fill="none" stroke="#35b4f0" stroke-width="2" d="M10 8v-6h12v6"/><path fill="#f25022" d="M10 12h5v6h-5z"/><path fill="#7fba00" d="M17 12h5v6h-5z"/><path fill="#00a4ef" d="M10 19h5v6h-5z"/><path fill="#ffb900" d="M17 19h5v6h-5z"/></svg></button>
    <button aria-label="AutoCAD"><svg viewBox="0 0 32 32"><path fill="#ef9a9a" d="M1 1h30v30h-30z"/><path fill="#d81a20" d="M1 8l30 18v5h-30z"/><path fill="#6d0d10" d="M16 4l11 20-11-5-10 4z"/><path fill="#b01216" d="M16 4v15l-10 4z"/></svg></button>
    <button aria-label="Word"><svg viewBox="0 0 32 32"><path fill="#2b7cd3" d="M8 2h23v28h-23z"/><path fill="#41a5ee" d="M8 2h23v8h-23z"/><path fill="#103f91" d="M8 23h23v7h-23z"/><path fill="#185abd" d="M1 8h16v16h-16z"/><text class="tile" x="2" y="21">W</text></svg></button>
    <button class="run" aria-label="浏览器"><svg viewBox="0 0 32 32"><path fill="none" stroke="#45b82f" stroke-width="6" d="M8 17h17q0-9-8-9t-9 9q0 8 9 8 5 0 8-3"/><path fill="none" stroke="#8fdb5f" stroke-width="2.500" d="M4 29q-5-5 7-17t17-9q2 2 1 6"/></svg></button>
    <button aria-label="Excel"><svg viewBox="0 0 32 32"><path fill="#21a366" d="M8 2h23v28h-23z"/><path fill="#33c481" d="M20 2h11v10h-11z"/><path fill="#185c37" d="M8 22h23v8h-23z"/><path fill="#107c41" d="M1 8h16v16h-16z"/><text class="tile" x="4" y="21">X</text></svg></button>
    <button aria-label="Photoshop"><svg viewBox="0 0 32 32"><path fill="#001d26" stroke="#00c8ff" stroke-width="2" d="M2 2h28v28h-28z"/><text class="tile ps" x="7" y="21">Ps</text></svg></button>
    <button aria-label="资源管理器"><svg viewBox="0 0 32 32"><path fill="#e8a010" d="M2 4h10l3 3h-2v6h-11z"/><path fill="#ffd35c" d="M2 8h28v18h-28z"/><path fill="#3b97e8" d="M7 28v-9q0-3 3-3h12q3 0 3 3v9h-5v-6h-8v6z"/></svg></button>
    <button class="orange" aria-label="购物"><svg viewBox="0 0 32 32"><path fill="none" stroke="#ff6a00" stroke-width="3" d="M10 11l6-8 6 8"/><path fill="#ffd84a" d="M1 10h30v6h-30z"/><path fill="#ffbe1a" d="M4 16h24l-2 14h-20z"/><path stroke="#fff1b0" stroke-width="2" d="M11 18v9M16 18v9M21 18v9"/></svg></button>
    <button class="active" aria-label="广联达"><svg viewBox="0 0 32 32"><rect width="32" height="32" rx="6" fill="#d8defa"/><path fill="url(#g-logo)" d="M15 6q3-4 5 0l7 18q-3 3-8-2h-5l4-4-3-5q-2 7-7 12-4 1-3-3 7-6 10-16z"/></svg></button>
  </div>
  <div class="tray">
    <svg viewBox="0 0 20 20"><path fill="none" stroke="#111" stroke-width="1.500" d="M3 13l7-7 7 7"/></svg>
    <svg viewBox="0 0 20 20"><path fill="#111" d="M10 0q6 0 6 7l3 7-3 1q-1 4-6 4t-6-4l-3-1 3-7q0-7 6-7z"/><ellipse cx="9" cy="13" rx="4" ry="5" fill="#fff"/><path fill="#e33" d="M4 9h11v3h-11z"/><path fill="#ffb52e" d="M9 11h11v7h-11z"/></svg>
    <svg viewBox="0 0 20 20"><circle cx="10" cy="10" r="9" fill="#2bb24c"/><path fill="#ffd21c" d="M10 1a9 9 0 0 1 0 18q-3-9 0-18z"/><path stroke="#fff" stroke-width="3" d="M5 10h10M10 5v10"/></svg>
    <svg viewBox="0 0 20 20"><circle cx="10" cy="10" r="8.500" fill="#e6efe2" stroke="#555"/><path stroke="#333" stroke-width="1.500" d="M6 6l8 8M14 6l-8 8"/></svg>
    <svg class="sg" viewBox="0 0 20 20"><path fill="#f4572c" d="M2 3l15-3 2 15-15 4z"/><path fill="none" stroke="#fff" stroke-width="2.500" d="M15 5q-8-1-8 2t6 3 0 4q-4 1-7 0"/></svg>
  </div>
  <div class="clock"><span>18:52 周一</span><span>2022/1/3</span><i></i></div>
  <button class="note" aria-label="通知"><svg viewBox="0 0 20 20"><path fill="#000" d="M0 1h20v15h-7l-3 4v-4h-10z"/><path stroke="#fff" d="M4 5h12M4 8.500h12M4 12h8"/></svg></button>
</footer>

<svg class="pointer" viewBox="0 0 324 170" aria-hidden="true"><path fill="#ff2010" d="M0 169L1 167L170 76L298 8L293 4L305 0L324 1L318 18L313 12L172 82L3 169z"/></svg>
</body>
</html>
```
FILE: styles.css
```css
* { box-sizing: border-box; }
html, body { height: 100%; }
body { margin: 0; display: flex; flex-direction: column; overflow: hidden; position: relative; background: #fff; color: #333; font: 15px/20px "Noto Sans", "Noto Sans CJK SC", sans-serif; }
button, input, select { font: inherit; color: inherit; margin: 0; padding: 0; border: 0; background: none; }
button { display: flex; align-items: center; gap: 4px; white-space: nowrap; }
a { color: inherit; text-decoration: none; }
ul { list-style: none; margin: 0; padding: 0; }
h1, h2, p { margin: 0; font-weight: 400; }
svg { width: 20px; height: 20px; flex: none; display: block; }
.sprite { position: absolute; width: 0; height: 0; }

.d, .b, .r, .g, .g2 { fill: none; stroke: #555b6e; stroke-width: 1.3; }
.b { stroke: #2b7de9; }
.r { stroke: #e02020; }
.g { stroke: #bdbdbd; }
.g2 { stroke: #999; }
.w2 { stroke-width: 1.8; }
.w3 { stroke-width: 2.6; }
.lb { fill: #d3e6ff; }
.cl { fill: #e4f0ff; }
.wf { fill: #fff; }
.fb { fill: #2179ee; }
.fd { fill: #4b5163; }
.dash { stroke-dasharray: 3 1; }

.caret { flex: none; width: 0; height: 0; border: 5px solid transparent; border-top: 6px solid #808080; border-bottom: 0; margin-left: 6px; }
.cells .caret { margin-left: 3px; border-width: 5px 4px 0; }
.cells .caret.near { margin-left: 0; }
.caret.pale { border-top-color: #b0b0b0; }
.caret.dark { border-top-color: #4b5163; }
.caret.sm { border-width: 4px 3px 0; }
.tri { flex: none; width: 0; height: 0; border: 5px solid transparent; border-left: 6px solid #909090; border-right: 0; }
.tri.swatch { display: block; margin: 0 auto; border-width: 5px 0 5px 10px; border-left-color: #4b5163; }

/* title and tabs */
.top { display: flex; height: 52px; flex: none; border-bottom: 1px solid #eee; }
.logo { width: 44px; height: 40px; margin: 3px 4px 0 2px; }
.top-rows { flex: 1; min-width: 0; }
.titlebar { display: flex; height: 26px; align-items: center; padding-left: 9px; }
.quick { display: flex; align-items: center; gap: 13px; }
.quick .drop { width: 30px; gap: 4px; }
.quick .caret { margin: 0; border-width: 4px 3px 0; }
.quick > .caret { margin: 0 6px 0 -2px; }
h1 { font-size: 15px; line-height: 20px; white-space: nowrap; flex: 1; min-width: 0; overflow: hidden; }
.winbtns { display: flex; gap: 31px; padding-right: 17px; }
.winbtns svg { width: 14px; height: 14px; }
.tabrow { display: flex; height: 25px; align-items: center; }
.tabs { display: flex; flex: 1; padding-left: 4px; }
.tabs a { padding: 0 16px; height: 24px; line-height: 23px; border-radius: 12px; margin-right: 1px; }
.tabs .on { background: #1a90ff; color: #fff; }
.user { display: flex; align-items: center; gap: 1px; width: 107px; }
.help { display: flex; gap: 8px; width: 83px; }
.help .q { font-size: 20px; gap: 1px; }
.help .caret { margin: 0; }
.search { display: flex; align-items: center; width: 186px; height: 22px; border: 1px solid #d4d4d4; border-radius: 3px; padding: 0 5px 0 2px; }
.search input { flex: 1; min-width: 0; }
.search svg { width: 15px; height: 15px; }
input::placeholder { color: #888; opacity: 1; }
.fold { padding: 0 8px 0 4px; }
.fold svg { width: 16px; height: 16px; }

/* ribbon */
.ribbon { display: flex; height: 126px; flex: none; border-bottom: 1px solid #d8d8d8; }
.group { position: relative; flex: none; padding-top: 1px; }
.group::after { content: ""; position: absolute; right: 0; top: 2px; height: 118px; border-right: 1px solid #dcdcdc; }
.cells { display: grid; grid-template-rows: repeat(3, 29px); height: 87px; }
.glabel { display: flex; justify-content: center; align-items: center; margin-top: 9px; height: 22px; white-space: nowrap; }
.off { color: #a8a8a8; }
.g1 { width: 220px; }
.g1 .cells { grid-template-columns: 105px 1fr; padding-left: 4px; }
.g1 .glabel { padding-right: 10px; }
.g2 { width: 346px; }
.g2 .cells { grid-template-columns: 106px 141px 1fr; padding-left: 9px; }
.g3 { width: 274px; }
.g3 .cells { grid-template-columns: 167px 1fr; padding-left: 11px; }
.g4 { width: 95px; }
.g4 .cells { grid-template-columns: 40px 1fr; padding-left: 15px; }
.g5 { width: 95px; }
.g5 .cells { grid-template-columns: 40px 1fr; padding-left: 15px; }
.g6 { width: 516px; }
.g6 .cells { grid-template-columns: 63px 65px 103px 169px 1fr; padding-left: 6px; }
.g6 .wide { grid-column: span 2; }
.big { grid-row: span 3; flex-direction: column; gap: 5px; padding-top: 5px; justify-self: start; width: 60px; }
.big svg { width: 40px; height: 40px; }
.g7 { width: 98px; }
.g7 .cells { padding-left: 15px; }
.g8 { width: 103px; }
.g8 .cells { grid-template-columns: 48px 1fr; padding-left: 7px; }
.g8 .hot { background: #d6e8ff; width: 37px; height: 24px; border-radius: 3px; align-self: center; justify-content: center; }
.g8 button { gap: 2px; }
.g9 { width: 158px; }
.g9 .cells { grid-template-columns: 40px 40px 1fr; padding-left: 16px; }
.g8 .glabel, .g9 .glabel { padding-right: 5px; }
.tooltip { position: absolute; z-index: 5; left: 7px; top: 124px; width: 230px; height: 125px; padding: 6px 9px; background: #fff; border: 1px solid #c0c0c0; border-radius: 4px; box-shadow: 0 3px 8px rgba(0,0,0,.35); }
.tooltip b { font-weight: 700; display: block; margin-bottom: 6px; }
.tooltip p { width: 211px; line-height: 21px; }
.tooltip hr, .viewbar hr { border: 0; border-top: 1px solid #999; margin: 9px 0 0; }

/* drop-downs under the ribbon */
.pickers { display: flex; gap: 7px; height: 33px; flex: none; background: #f1f1f1; padding-top: 2px; }
.pick { position: relative; width: 124px; height: 28px; background: #fff; border: 1px solid #dcdcdc; border-radius: 4px; }
.pick:first-child { width: 119px; border-color: #6f9be0; border-left: 0; border-radius: 0 4px 4px 0; }
.pick select { appearance: none; width: 100%; height: 25px; padding-left: 4px; outline: 0; }
.pick:first-child select { padding-left: 0; }
.pick::after { content: ""; position: absolute; right: 6px; top: 11px; border: 3px solid transparent; border-top: 5px solid #4b5163; border-bottom: 0; pointer-events: none; }

/* panels */
.work { display: flex; flex: 1; min-height: 0; background: #f8f8f8; }
.panel { display: flex; flex-direction: column; background: #fff; border: 1px solid #ddd; min-height: 0; }
.strip { height: 15px; flex: none; background: #e6e6e6; border-bottom: 1px solid #d8d8d8; display: flex; justify-content: flex-end; align-items: center; padding-right: 4px; }
.strip button { width: 10px; height: 10px; background: linear-gradient(45deg, transparent 45%, #999 46%, #999 54%, transparent 55%), linear-gradient(-45deg, transparent 45%, #999 46%, #999 54%, transparent 55%); }
h2 { flex: none; height: 27px; line-height: 25px; font-size: 15px; padding-left: 9px; background: #f0f0f0; color: #777; border-bottom: 1px solid #ddd; }
.tools { display: flex; align-items: center; flex: none; height: 34px; border-bottom: 2px solid #e6e6e6; }
.caret.sp { margin-left: 4px; }
.find { display: flex; align-items: center; flex: none; height: 26px; border-bottom: 1px solid #ddd; padding: 0 8px 0 3px; }
.find input { flex: 1; min-width: 0; line-height: 18px; padding-bottom: 2px; }
.find svg { width: 15px; height: 15px; }
.more { width: 15px; height: 24px; border: 1px solid #e4e4e4; border-radius: 4px; justify-content: center; gap: 0; margin-left: auto; }
.more i { border: 3px solid transparent; border-left: 4px solid #4b5163; border-right: 0; }
.hbar { display: flex; align-items: center; flex: none; height: 18px; padding: 0 6px; gap: 6px; }
.hbar .track { flex: 1; }
.thumb { background: #c6c6c6; border-radius: 5px; height: 10px; }
.larr, .rarr { border: 5px solid transparent; border-right: 5px solid #4b5163; border-left: 0; }
.rarr { border-left: 5px solid #4b5163; border-right: 0; }
.vbar { flex: none; width: 20px; padding: 0 5px; }
.btn { border: 1px solid #c4c4c4; border-radius: 4px; height: 32px; justify-content: center; background: #fff; flex: none; }
table { border-collapse: collapse; table-layout: fixed; }
th, td { font-weight: 400; padding: 0; border: 1px solid #dcdcdc; text-align: left; white-space: nowrap; overflow: hidden; }
th { text-align: center; }
.clip { flex: 1; min-width: 0; overflow: hidden; }

.nav { width: 176px; flex: none; border-left: 0; margin-right: 5px; }
.nav h2 { padding-left: 3px; }
.navtools { gap: 9px; }
.tree { flex: 1; overflow: hidden; padding-top: 3px; }
.tree li { height: 30px; display: flex; align-items: center; padding-left: 43px; white-space: nowrap; }
.tree .top1 { padding-left: 8px; }
.tree .top1 .tri { margin-right: 7px; }
.tree .top1 .caret { border-width: 5px 4px 0; margin: 0 7px 0 -2px; }
.tree a { display: flex; align-items: center; gap: 7px; width: 133px; height: 27px; padding-left: 4px; overflow: hidden; border-radius: 3px 0 0 3px; }
.tree .on { background: #c1d9f3; }
.nav .hbar { padding: 0 7px 0 0; }
.nav .thumb { width: 137px; }

.side { width: 356px; flex: none; display: flex; flex-direction: column; gap: 6px; }
.complist { height: 387px; flex: none; }
.complist .tools { gap: 10px; padding-left: 5px; }
.complist .more { margin-right: 1px; }
.listbox { display: flex; flex: 1; min-height: 0; overflow: hidden; }
.listbox ul { flex: 1; min-width: 0; padding-top: 1px; }
.listbox li { height: 30px; line-height: 30px; padding-left: 79px; font-size: 16px; white-space: nowrap; overflow: hidden; }
.listbox .par { display: flex; align-items: center; gap: 5px; padding-left: 35px; font-size: 15px; }
.listbox .par .caret { border-width: 5px 4px 0; }
.listbox .vbar { width: 17px; padding: 75px 3px 0 4px; }
.listbox .thumb { height: 19px; }
.complist .hbar { padding-right: 22px; }
.complist .hbar .thumb { width: 252px; }
.props { flex: 1; }
.propbox { display: flex; height: 310px; flex: none; border-bottom: 1px solid #ddd; }
.props table { width: 336px; margin: -1px 0 0 -1px; }
.props tr, .sheets tr { height: 26px; }
.props td { padding-left: 4px; }
.props td:first-child { text-align: center; padding: 0; }
.props .key { color: #1a5cff; }
.c1 { width: 28px; }
.c2 { width: 143px; }
.props .vbar { padding: 18px 5px 0 4px; width: 19px; }
.props .thumb { height: 114px; }
.props .btn { width: 100px; margin: 0 0 0 11px; }

.split { width: 6px; flex: none; background: #fff; }
.split i { display: flex; align-items: center; justify-content: center; height: 125px; margin-top: 99px; background: #636b75; }
.split i::after { content: ""; border: 4px solid transparent; border-left: 4px solid #c4c8cc; border-right: 0; }
.side + .split i::after { border-left: 0; border-right: 4px solid #c4c8cc; }
.center { flex: 1; min-width: 0; display: flex; flex-direction: column; }
.canvas { position: relative; height: 321px; flex: none; background: #000; overflow: hidden; }
.cad { width: 100%; height: 100%; }
.cadtext { fill: #d8d8d8; font-family: Lato, "Noto Sans CJK SC", sans-serif; font-weight: 300; }
.t48 { font-size: 46px; }
.t24 { font-size: 24px; }
.t22 { font-size: 22px; }
.axis { font-size: 16px; font-family: "Noto Sans", sans-serif; }
.ay { fill: #0f0; }
.ax { fill: #f00; }
.viewbar { position: absolute; right: 0; top: 1px; width: 41px; height: 283px; background: #fff; border: 1px solid #ddd; border-radius: 0 0 4px 4px; display: flex; flex-direction: column; align-items: center; padding-top: 13px; gap: 8px; }
.viewbar svg { width: 28px; height: 28px; }
.viewbar .caret { margin: 0 0 1px; border-width: 5px 4px 0; }
.viewbar hr { width: 28px; margin: -5px 0 -2px; border-color: #555; }
.three { position: relative; }
.three b { position: absolute; left: 5px; top: 11px; font-size: 11px; line-height: 14px; color: #2b7de9; }
.hsplit { height: 6px; flex: none; background: #fff; }
.hsplit i { display: flex; justify-content: center; width: 125px; height: 5px; margin: 0 auto; background: #636b75; }
.hsplit i::after { content: ""; border: 4px solid transparent; border-top: 4px solid #c4c8cc; border-bottom: 0; }

.calc { flex: 1; }
.calcbody { flex: 1; min-height: 0; display: flex; flex-direction: column; align-items: flex-end; padding: 7px 8px 0 9px; overflow: hidden; }
.calcbody .btn { width: 178px; }
.calcbox { display: flex; flex: 1; align-self: stretch; min-height: 0; margin-top: 8px; border: 1px solid #ddd; overflow: hidden; }
.calcbox table { flex: 1; margin: -1px 0 0 -1px; align-self: flex-start; }
.calcbox tr { height: 51px; }
.calcbox thead tr { height: 31px; }
.calcbox .one { height: 30px; }
.calcbox td { padding: 0 0 0 4px; line-height: 21px; }
.calcbox .sel { background: #7ab8ff; color: #fff; font-weight: 500; }
.calcbox .cur { border: 2px solid #777; }
.k1 { width: 47px; }
.k2 { width: 69px; }
.k3 { width: 87px; }
.k4 { width: 119px; }
.k5 { width: 141px; }
.k6 { width: 39px; }
.k8 { width: 67px; }
.calcbox .vbar { width: 32px; padding: 17px 4px 0 19px; }
.calcbox .thumb { height: 19px; }

.right { width: 397px; flex: none; display: flex; flex-direction: column; gap: 6px; }
.sheets { height: 387px; flex: none; }
.sheets .tools { padding-left: 7px; gap: 10px; }
.sheets .find { height: 32px; }
.sheetbox { display: flex; flex: 1; min-height: 0; }
.sheets table { width: 400px; }
.s2 { width: 138px; }
.s3 { width: 64px; }
.s4 { width: 89px; }
.s5 { width: 81px; }
.sheets .lt { text-align: left; padding-left: 2px; }
.sheets td { text-align: center; }
.sheets td:last-child { text-align: left; padding-left: 4px; }
.sheets .on td { background: #d5e9ff; }
.sheets .on td:first-child { background: #fff; }
.sheets .t0, .sheets .t1 { text-align: left; padding-left: 3px; }
.sheets .t1 { padding-left: 15px; }
.sheets .t2 { text-align: left; padding-left: 51px; background: linear-gradient(#ddd, #ddd) 23px 12px / 21px 1px no-repeat, linear-gradient(#ddd, #ddd) 23px 0 / 1px 100% no-repeat; }
.sheets .on .t2 { background-color: #d5e9ff; }
.pm { display: inline-flex; width: 16px; height: 16px; border: 1px solid #777; border-radius: 2px; justify-content: center; line-height: 14px; margin-right: 7px; vertical-align: -2px; }
.sheets .vbar { padding-top: 17px; }
.sheets .vbar .thumb { height: 28px; }
.sheets .hbar { padding: 0 25px 0 8px; }
.sheets .hbar .thumb { width: 255px; }
.layers { flex: 1; }
.layers .tools { padding-left: 5px; gap: 10px; border-bottom-width: 1px; }
.layerbox { flex: 1; margin-top: 7px; border-top: 1px solid #ddd; }
.layerbox table { width: 298px; margin: -1px 0 0; }
.layerbox tr { height: 32px; }
.layerbox thead tr { height: 26px; }
.l1 { width: 63px; }
.l2 { width: 45px; }
.layerbox td { text-align: center; }
.layerbox td:last-child { text-align: left; padding: 0 0 2px 4px; }
.layerbox td:nth-child(2) { padding-bottom: 2px; }
.layerbox input { appearance: none; width: 17px; height: 17px; border: 2px solid #aaa; border-radius: 3px; background: #8fc1ff; box-shadow: inset 0 0 0 1px #3d8cf0; vertical-align: middle; margin-top: 8px; }

/* status bar */
.status { display: flex; align-items: center; height: 40px; flex: none; background: #fbfbfb; overflow: hidden; white-space: nowrap; }
.s-xy { width: 327px; margin-left: -4px; }
.s-h { width: 141px; }
.s-b { width: 167px; }
.s-n { width: 129px; }
.s-c { width: 128px; }
.sbtns { display: flex; gap: 4px; margin-right: 7px; }
.status button { width: 31px; height: 32px; border: 1px solid #b5b5b5; border-radius: 4px; justify-content: center; background: #fff; gap: 3px; }
.status .dd { width: 45px; }
.status .caret { margin: 0; }
.status .on { background: #d5e6fb; border-color: #4f8fe6; }
.zoomer { display: flex; align-items: center; margin-left: 12px; }
.zoomer input { appearance: none; width: 57px; height: 24px; background: linear-gradient(#bbb, #bbb) 0 11px / 100% 2px no-repeat; }
.zoomer input::-webkit-slider-thumb { appearance: none; width: 11px; height: 23px; border: 2px solid #777d88; border-radius: 4px; background: #f4f4f4; }

/* task bar */
.taskbar { display: flex; height: 50px; flex: none; background: #d2e4c9; }
.start { width: 53px; padding-left: 12px; }
.start svg { width: 20px; height: 20px; }
.tsearch { display: flex; align-items: center; gap: 14px; width: 429px; background: #fff; border: 1px solid #bbb; padding-left: 12px; font-size: 19px; }
.tsearch svg { width: 22px; height: 22px; }
.tsearch input { flex: 1; }
.tsearch input::placeholder { color: #111; }
.apps { display: flex; flex: 1; padding-left: 3px; }
.apps button { width: 62px; justify-content: center; border-bottom: 3px solid transparent; padding-top: 3px; }
.apps svg { width: 30px; height: 30px; }
.apps .run { border-color: #0078d7; }
.apps .orange { background: #f6b077; border-color: #ff6a00; }
.apps .active { background: #edf5ea; border-color: #0078d7; }
.tile { fill: #fff; font-size: 14px; font-weight: 700; }
.tile.ps { fill: #2fd0ff; }
.tray { display: flex; align-items: center; gap: 10px; }
.tray .sg { margin-left: 5px; }
.clock { position: relative; display: flex; flex-direction: column; align-items: center; justify-content: center; width: 128px; font-size: 16px; color: #111; }
.clock i { position: absolute; right: 16px; top: 2px; width: 6px; height: 6px; border-radius: 3px; background: #f00; }
.note { width: 47px; padding-right: 24px; justify-content: center; border-right: 1px solid #9aa894; margin-right: 5px; }

.pointer { position: absolute; z-index: 9; left: 1325px; top: 134px; width: 324px; height: 170px; pointer-events: none; }
```
